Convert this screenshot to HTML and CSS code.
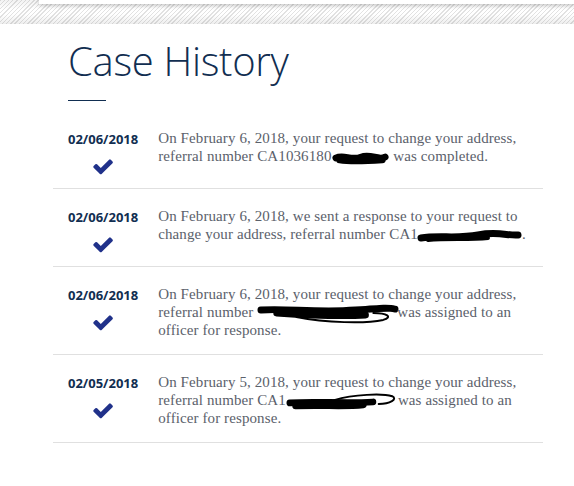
FILE: index.html
```html
<!DOCTYPE html>
<html lang="en">
<head>
  <meta charset="UTF-8">
  <meta name="viewport" content="width=device-width, initial-scale=1">
  <title>Case History</title>
  <link rel="stylesheet" href="styles.css">
</head>
<body>
  <div class="band">
    <div class="band-card"></div>
  </div>

  <div class="history">
    <h1>Case History</h1>
    <hr class="title-rule">

    <div class="event">
      <div class="event-meta">
        <div class="event-date">02/06/2018</div>
        <svg class="check" viewBox="100 340 1580 1200" width="20" height="16"><path d="M1671 566q0 40-28 68l-724 724-136 136q-28 28-68 28t-68-28l-136-136-362-362q-28-28-28-68t28-68l136-136q28-28 68-28t68 28l294 295 656-657q28-28 68-28t68 28l136 136q28 28 28 68z"/></svg>
      </div>
      <p class="event-text">On February 6, 2018, your request to change your address, referral number CA1036180<svg class="redact" viewBox="0 0 60 12" width="58" height="12"><path d="M4 6 C12 2, 20 9, 30 5 S 48 9, 55 5"/><path d="M8 8 C20 10, 36 9, 52 8"/></svg> was completed.</p>
    </div>

    <div class="event">
      <div class="event-meta">
        <div class="event-date">02/06/2018</div>
        <svg class="check" viewBox="100 340 1580 1200" width="20" height="16"><path d="M1671 566q0 40-28 68l-724 724-136 136q-28 28-68 28t-68-28l-136-136-362-362q-28-28-28-68t28-68l136-136q28-28 68-28t68 28l294 295 656-657q28-28 68-28t68 28l136 136q28 28 28 68z"/></svg>
      </div>
      <p class="event-text">On February 6, 2018, we sent a response to your request to change your address, referral number CA1<svg class="redact" viewBox="0 0 104 12" width="104" height="12"><path d="M3 8 C20 5, 40 9, 60 5 S 90 6, 100 5"/><path class="mid" d="M10 10 C30 8, 50 10, 70 8"/></svg>.</p>
    </div>

    <div class="event">
      <div class="event-meta">
        <div class="event-date">02/06/2018</div>
        <svg class="check" viewBox="100 340 1580 1200" width="20" height="16"><path d="M1671 566q0 40-28 68l-724 724-136 136q-28 28-68 28t-68-28l-136-136-362-362q-28-28-28-68t28-68l136-136q28-28 68-28t68 28l294 295 656-657q28-28 68-28t68 28l136 136q28 28 28 68z"/></svg>
      </div>
      <p class="event-text">On February 6, 2018, your request to change your address, referral number <svg class="redact" viewBox="0 0 142 12" width="140" height="12"><path d="M4 2 C30 0, 60 5, 100 2 S 130 0, 140 1"/><path d="M20 5 C50 7, 80 9, 110 7"/><path class="thin" d="M40 9 C70 15, 110 16, 128 12 C138 9, 132 5, 118 5"/></svg>was assigned to an officer for response.</p>
    </div>

    <div class="event">
      <div class="event-meta">
        <div class="event-date">02/05/2018</div>
        <svg class="check" viewBox="100 340 1580 1200" width="20" height="16"><path d="M1671 566q0 40-28 68l-724 724-136 136q-28 28-68 28t-68-28l-136-136-362-362q-28-28-28-68t28-68l136-136q28-28 68-28t68 28l294 295 656-657q28-28 68-28t68 28l136 136q28 28 28 68z"/></svg>
      </div>
      <p class="event-text">On February 5, 2018, your request to change your address, referral number CA1<svg class="redact" viewBox="0 0 116 12" width="112" height="12"><path d="M4 7 C30 5, 60 8, 90 6"/><path d="M10 10 C40 9, 60 11, 80 9"/><path class="thin" d="M50 4 C70 -2, 100 -3, 110 0 C116 3, 108 8, 96 8"/></svg>was assigned to an officer for response.</p>
    </div>
  </div>
</body>
</html>
```

FILE: styles.css
```css
body {
  margin: 0;
  background: #fff;
  font-family: 'Liberation Serif', serif;
}
.band {
  height: 24px;
  background:
    linear-gradient(rgba(0, 0, 0, 0.05), rgba(0, 0, 0, 0) 40%, rgba(0, 0, 0, 0) 60%, rgba(0, 0, 0, 0.07)),
    repeating-linear-gradient(-45deg, #fff 0, #fff 2px, #e2e2e2 2px, #e2e2e2 3px);
}
.band-card {
  margin-left: 39px;
  height: 4px;
  background: #fff;
  box-shadow: 0 1px 4px rgba(0, 0, 0, 0.25);
}
.history {
  margin-left: 53px;
  width: 490px;
}
h1 {
  margin: 13px 0 0 15px;
  font-family: 'Open Sans', sans-serif;
  font-weight: 300;
  font-size: 40px;
  line-height: 48px;
  letter-spacing: -0.3px;
  color: #112e51;
}
.title-rule {
  margin: 15px 0 10px 15px;
  width: 38px;
  height: 1px;
  border: none;
  background: #112e51;
}
.event {
  display: flex;
  gap: 20px;
  padding: 20px 0 13px 15px;
  border-bottom: 1px solid #e0e0e0;
}
.event-meta {
  flex: 0 0 70px;
  text-align: center;
}
.event-date {
  font-family: 'Open Sans', sans-serif;
  font-weight: 700;
  font-size: 13px;
  line-height: 16px;
  color: #112e51;
}
.check {
  display: block;
  margin: 12px auto 0;
  fill: #20318a;
}
.event-text {
  flex: 1;
  margin: -2px 0 2px;
  font-size: 15px;
  line-height: 18px;
  letter-spacing: 0.1px;
  color: #5b616b;
}
.redact {
  vertical-align: -3px;
  overflow: visible;
  fill: none;
  stroke: #000;
  stroke-linecap: round;
}
.redact path {
  stroke-width: 7px;
}
.redact .mid {
  stroke-width: 4px;
}
.redact .thin {
  stroke-width: 2px;
}
```
